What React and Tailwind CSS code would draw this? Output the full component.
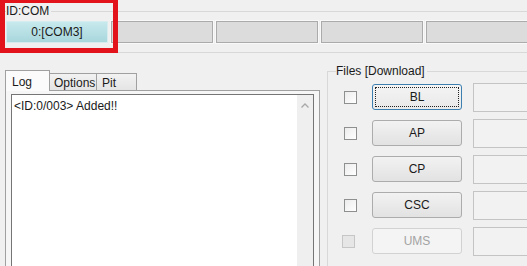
import React from "react";

const files = [
  { name: "BL", focus: true },
  { name: "AP" },
  { name: "CP" },
  { name: "CSC" },
  { name: "UMS", disabled: true },
];

const PortBox = ({ label, active }) => {
  if (active) {
    return (
      <div className="w-[102px] h-[22px] shrink-0 border border-[#d6ecee] bg-[linear-gradient(#c6e9ed,#a8d7dc)] text-center leading-[20px] text-[#1a1a1a]">
        {label}
      </div>
    );
  }
  return (
    <div className="w-[102px] h-[22px] shrink-0 border border-[#ababab] bg-[#dcdcdc] shadow-[0_0_0_1px_#f9f9f9]" />
  );
};

const FileRow = ({ name, focus, disabled }) => (
  <div className="flex items-center h-[30px] ml-[8px]">
    <div
      className={
        disabled
          ? "w-[13px] h-[13px] shrink-0 -ml-[2px] mr-[2px] border border-[#c6c6c6] bg-[#e6e6e6]"
          : "w-[13px] h-[13px] shrink-0 border border-[#8e8f8f] bg-[linear-gradient(135deg,#ececec,#ffffff)]"
      }
    />
    <div
      className={
        "relative shrink-0 ml-[15px] w-[90px] h-[26px] rounded-[3px] border text-center leading-[24px] " +
        (focus
          ? "border-[#3c7fb1] bg-[linear-gradient(#f4f4f4,#e9e9e9)] text-[#1a1a1a]"
          : disabled
          ? "border-[#d2d2d2] bg-[#f4f4f4] text-[#a3a3a3]"
          : "border-[#acacac] bg-[linear-gradient(#f2f2f2,#e2e2e2)] text-[#1a1a1a]")
      }
    >
      {name}
      {focus && (
        <div className="absolute inset-[2px] border border-dotted border-[#222]" />
      )}
    </div>
    <div className="ml-[11px] w-[120px] h-[29px] shrink-0 border border-[#c4c4c4] bg-[#f2f2f2]" />
  </div>
);

export default function App() {
  return (
    <div className="relative w-[527px] h-[266px] overflow-hidden bg-[#f0f0f0] font-['Liberation_Sans',Arial,sans-serif] text-[12px] leading-[14px] text-[#1a1a1a]">
      {/* ID:COM group */}
      <fieldset className="mt-[4px] w-[620px] h-[49px] border border-[#d8d8d8] pl-[5px]">
        <legend className="pr-[2px] leading-[14px]">ID:COM</legend>
        <div className="mt-[3px] flex gap-[3px]">
          <PortBox label="0:[COM3]" active />
          <PortBox />
          <PortBox />
          <PortBox />
          <PortBox />
        </div>
      </fieldset>

      <div className="mt-[11px] flex items-start w-[700px]">
        {/* tabs + log */}
        <div className="ml-[5px] w-[315px] shrink-0 pt-[6px]">
          <div className="flex items-end h-[21px]">
            <div className="relative z-10 w-[45px] h-[21px] border border-b-0 border-[#a0a0a0] bg-[#fbfbfb] pl-[6px] pt-[4px]">
              Log
            </div>
            <div className="-ml-px mb-px w-[48px] h-[17px] border border-b-0 border-[#a0a0a0] bg-[linear-gradient(#f2f2f2,#e4e4e4)] pl-[4px] pt-[2px]">
              Options
            </div>
            <div className="-ml-px mb-px w-[41px] h-[17px] border border-b-0 border-[#a0a0a0] bg-[linear-gradient(#f2f2f2,#e4e4e4)] pl-[5px] pt-[2px]">
              Pit
            </div>
          </div>
          <div className="-mt-px h-[190px] border border-[#a0a0a0] bg-[#f6f6f6] pl-[5px] pr-[5px] pt-[3px]">
            <div className="flex h-[200px] border border-[#757575] bg-white">
              <div className="flex-1 pl-[2px] pt-[4px]">&lt;ID:0/003&gt; Added!!</div>
              <div className="w-[16px] bg-[#efefef] flex justify-center pt-[8px]">
                <svg width="8" height="5" viewBox="0 0 8 5">
                  <polyline points="0.5,4.5 4,1 7.5,4.5" fill="none" stroke="#a8a8a8" strokeWidth="1.3" />
                </svg>
              </div>
            </div>
          </div>
        </div>

        {/* Files group */}
        <fieldset className="ml-[7px] w-[260px] shrink-0 h-[260px] border border-[#d8d8d8] pl-[8px]">
          <legend className="pr-[2px] leading-[14px]">Files [Download]</legend>
          <div className="mt-[4px] flex flex-col gap-[6px]">
            {files.map((f) => (
              <FileRow key={f.name} {...f} />
            ))}
          </div>
        </fieldset>
      </div>

      {/* highlight frame */}
      <div className="absolute left-0 top-[-2px] w-[118px] h-[55px] border-[5px] border-[#e3131b]" />
    </div>
  );
}
